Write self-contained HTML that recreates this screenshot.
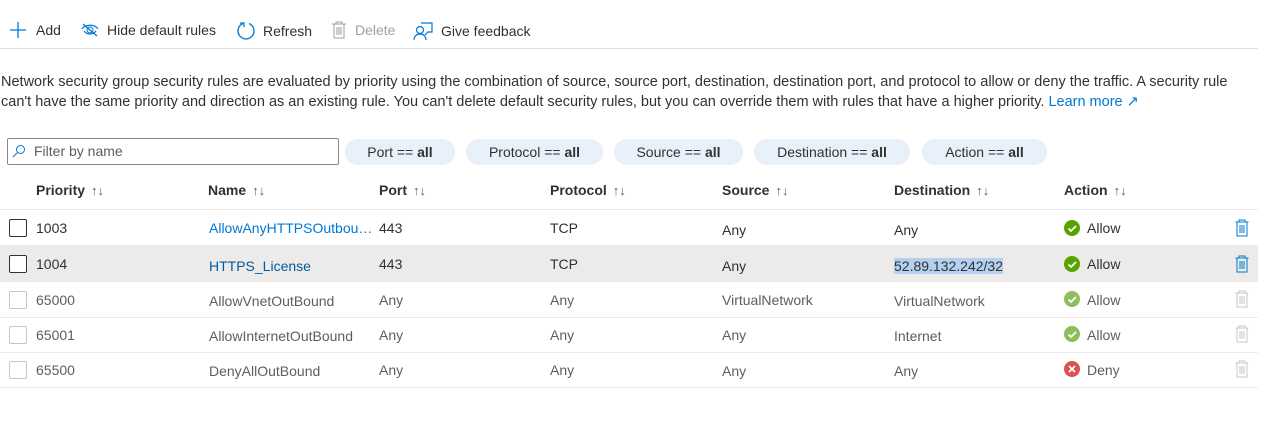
<!DOCTYPE html>
<html><head><meta charset="utf-8"><style>
*{margin:0;padding:0;box-sizing:border-box}
body{width:1280px;height:435px;background:#fff;font-family:"Liberation Sans",sans-serif;font-size:14px;color:#323130;position:relative;overflow:hidden}
.a{position:absolute;white-space:nowrap}
.tb{top:21px;font-size:14px;display:flex;align-items:center}
.p{line-height:20px;font-size:14.5px;left:1px}
.pill{position:absolute;top:139px;height:26px;border-radius:13px;background:#e8f1fa;font-size:14px;line-height:26px;text-align:center}
.row{position:absolute;left:0;width:1258px;height:36px;border-bottom:1px solid #edebe9}
.c{position:absolute;top:0;line-height:36px;font-size:14px;white-space:nowrap}
.cb{position:absolute;left:9px;top:9px;width:18px;height:18px;border:1px solid #323130;border-radius:2px}
.g .cb{border-color:#c8c6c4}
.g .c{color:#605e5c}
.h{font-weight:bold;color:#323130}
.ar{font-weight:normal;color:#605e5c;font-size:13px;margin-left:6px}
</style></head><body>
<div class="a tb" style="left:9px"><svg width="18" height="18" viewBox="0 0 18 18"><path d="M9 1v16M1 9h16" stroke="#0078d4" stroke-width="1.3"/></svg><span style="margin-left:9px">Add</span></div>
<div class="a tb" style="left:80px"><svg width="20" height="18" viewBox="0 0 20 18"><path d="M2 8c3-5 13-5 16 0M4 10c3 4 9 4 12 0" stroke="#0078d4" fill="none" stroke-width="1.2"/><circle cx="10" cy="9" r="3" stroke="#0078d4" fill="none"/><path d="M3 3l14 12" stroke="#0078d4" stroke-width="1.2"/></svg><span style="margin-left:7px">Hide default rules</span></div>
<div class="a tb" style="left:236px"><svg width="20" height="20" viewBox="0 0 20 20"><path d="M7 2.5A8 8 0 1 0 13 2.5" stroke="#0078d4" fill="none" stroke-width="1.3"/><path d="M4 2h4v4" stroke="#0078d4" fill="none" stroke-width="1.3"/></svg><span style="margin-left:7px">Refresh</span></div>
<div class="a tb" style="left:331px;color:#a19f9d"><svg width="16" height="18" viewBox="0 0 16 18"><path d="M1 3h14M5 3V1h6v2M3 3v14h10V3M6 6v8M8 6v8M10 6v8" stroke="#a19f9d" fill="none"/></svg><span style="margin-left:8px">Delete</span></div>
<div class="a tb" style="left:413px"><svg width="20" height="20" viewBox="0 0 20 20"><circle cx="7" cy="9" r="3.5" stroke="#0078d4" fill="none" stroke-width="1.2"/><path d="M1 19c0-4 3-6 6-6s6 2 6 6M8 2h11v9h-4l-3 3" stroke="#0078d4" fill="none" stroke-width="1.2"/></svg><span style="margin-left:8px">Give feedback</span></div>
<div class="a" style="left:0;top:48px;width:1258px;height:1px;background:#e1dfdd"></div>
<div class="a p" style="top:72px">Network security group security rules are evaluated by priority using the combination of source, source port, destination, destination port, and protocol to allow or deny the traffic. A security rule</div>
<div class="a p" style="top:92px">can't have the same priority and direction as an existing rule. You can't delete default security rules, but you can override them with rules that have a higher priority. <span style="color:#0078d4">Learn more ↗</span></div>
<div class="a" style="left:7px;top:138px;width:332px;height:27px;border:1px solid #8a8886;border-radius:2px;line-height:25px;padding-left:26px;color:#605e5c">Filter by name</div>
<svg class="a" style="left:12px;top:144px" width="14" height="14" viewBox="0 0 14 14"><circle cx="8.5" cy="5.5" r="4" stroke="#0078d4" fill="none"/><path d="M5.5 8.5L1 13" stroke="#0078d4"/></svg>
<div class="pill" style="left:345px;width:110px">Port == <b>all</b></div>
<div class="pill" style="left:466px;width:137px">Protocol == <b>all</b></div>
<div class="pill" style="left:614px;width:129px">Source == <b>all</b></div>
<div class="pill" style="left:754px;width:156px">Destination == <b>all</b></div>
<div class="pill" style="left:922px;width:125px">Action == <b>all</b></div>
<div class="row" style="top:172px;height:38px">
<div class="c h" style="left:36px;line-height:36px">Priority<span class="ar">↑↓</span></div>
<div class="c h" style="left:208px">Name<span class="ar">↑↓</span></div>
<div class="c h" style="left:379px">Port<span class="ar">↑↓</span></div>
<div class="c h" style="left:550px">Protocol<span class="ar">↑↓</span></div>
<div class="c h" style="left:722px">Source<span class="ar">↑↓</span></div>
<div class="c h" style="left:894px">Destination<span class="ar">↑↓</span></div>
<div class="c h" style="left:1064px">Action<span class="ar">↑↓</span></div>
</div>
<div class="row" style="top:210px"><div class="cb"></div><div class="c" style="left:36px">1003</div><div class="c" style="left:209px;color:#0078d4">AllowAnyHTTPSOutbou…</div><div class="c" style="left:379px">443</div><div class="c" style="left:550px">TCP</div><div class="c" style="left:722px;top:2px">Any</div><div class="c" style="left:894px;top:2px">Any</div><svg class="a" style="left:1064px;top:10px" width="16" height="16"><circle cx="8" cy="8" r="8" fill="#57a300"/><path d="M4.5 8.5l2.5 2.5 5-5" stroke="#fff" stroke-width="1.8" fill="none"/></svg><div class="c" style="left:1087px">Allow</div><svg class="a" style="left:1235px;top:9px" width="14" height="18" viewBox="0 0 14 18"><path d="M0.5 3h13M4 3V1h6v2M2 3v14h10V3M5 6v8M7 6v8M9 6v8" stroke="#0078d4" fill="none"/></svg></div>
<div class="row" style="top:246px;background:#edebe9"><div class="cb" style="background:#fff"></div><div class="c" style="left:36px">1004</div><div class="c" style="left:209px;top:2px;color:#005a9e">HTTPS_License</div><div class="c" style="left:379px">443</div><div class="c" style="left:550px">TCP</div><div class="c" style="left:722px;top:2px">Any</div><div class="c" style="left:894px;top:2px"><span style="background:#b3d0f0">52.89.132.242/32</span></div><svg class="a" style="left:1064px;top:10px" width="16" height="16"><circle cx="8" cy="8" r="8" fill="#57a300"/><path d="M4.5 8.5l2.5 2.5 5-5" stroke="#fff" stroke-width="1.8" fill="none"/></svg><div class="c" style="left:1087px">Allow</div><svg class="a" style="left:1235px;top:9px" width="14" height="18" viewBox="0 0 14 18"><path d="M0.5 3h13M4 3V1h6v2M2 3v14h10V3M5 6v8M7 6v8M9 6v8" stroke="#0078d4" fill="none"/></svg></div>
<div class="row g" style="top:282px"><div class="cb"></div><div class="c" style="left:36px">65000</div><div class="c" style="left:209px;top:1px">AllowVnetOutBound</div><div class="c" style="left:379px">Any</div><div class="c" style="left:550px">Any</div><div class="c" style="left:722px">VirtualNetwork</div><div class="c" style="left:894px;top:1px">VirtualNetwork</div><svg class="a" style="left:1064px;top:9px" width="16" height="16"><circle cx="8" cy="8" r="8" fill="#8cbf5a"/><path d="M4.5 8.5l2.5 2.5 5-5" stroke="#fff" stroke-width="1.8" fill="none"/></svg><div class="c" style="left:1087px">Allow</div><svg class="a" style="left:1235px;top:8px" width="14" height="18" viewBox="0 0 14 18"><path d="M0.5 3h13M4 3V1h6v2M2 3v14h10V3M5 6v8M7 6v8M9 6v8" stroke="#c8c6c4" fill="none"/></svg></div>
<div class="row g" style="top:317px"><div class="cb"></div><div class="c" style="left:36px">65001</div><div class="c" style="left:209px;top:1px">AllowInternetOutBound</div><div class="c" style="left:379px">Any</div><div class="c" style="left:550px">Any</div><div class="c" style="left:722px">Any</div><div class="c" style="left:894px;top:1px">Internet</div><svg class="a" style="left:1064px;top:9px" width="16" height="16"><circle cx="8" cy="8" r="8" fill="#8cbf5a"/><path d="M4.5 8.5l2.5 2.5 5-5" stroke="#fff" stroke-width="1.8" fill="none"/></svg><div class="c" style="left:1087px">Allow</div><svg class="a" style="left:1235px;top:8px" width="14" height="18" viewBox="0 0 14 18"><path d="M0.5 3h13M4 3V1h6v2M2 3v14h10V3M5 6v8M7 6v8M9 6v8" stroke="#c8c6c4" fill="none"/></svg></div>
<div class="row g" style="top:352px"><div class="cb"></div><div class="c" style="left:36px">65500</div><div class="c" style="left:209px;top:1px">DenyAllOutBound</div><div class="c" style="left:379px">Any</div><div class="c" style="left:550px">Any</div><div class="c" style="left:722px;top:1px">Any</div><div class="c" style="left:894px;top:1px">Any</div><svg class="a" style="left:1064px;top:9px" width="16" height="16"><circle cx="8" cy="8" r="8" fill="#d9534f"/><path d="M5 5l6 6M11 5l-6 6" stroke="#fff" stroke-width="1.8"/></svg><div class="c" style="left:1087px">Deny</div><svg class="a" style="left:1235px;top:8px" width="14" height="18" viewBox="0 0 14 18"><path d="M0.5 3h13M4 3V1h6v2M2 3v14h10V3M5 6v8M7 6v8M9 6v8" stroke="#c8c6c4" fill="none"/></svg></div>
</body></html>
